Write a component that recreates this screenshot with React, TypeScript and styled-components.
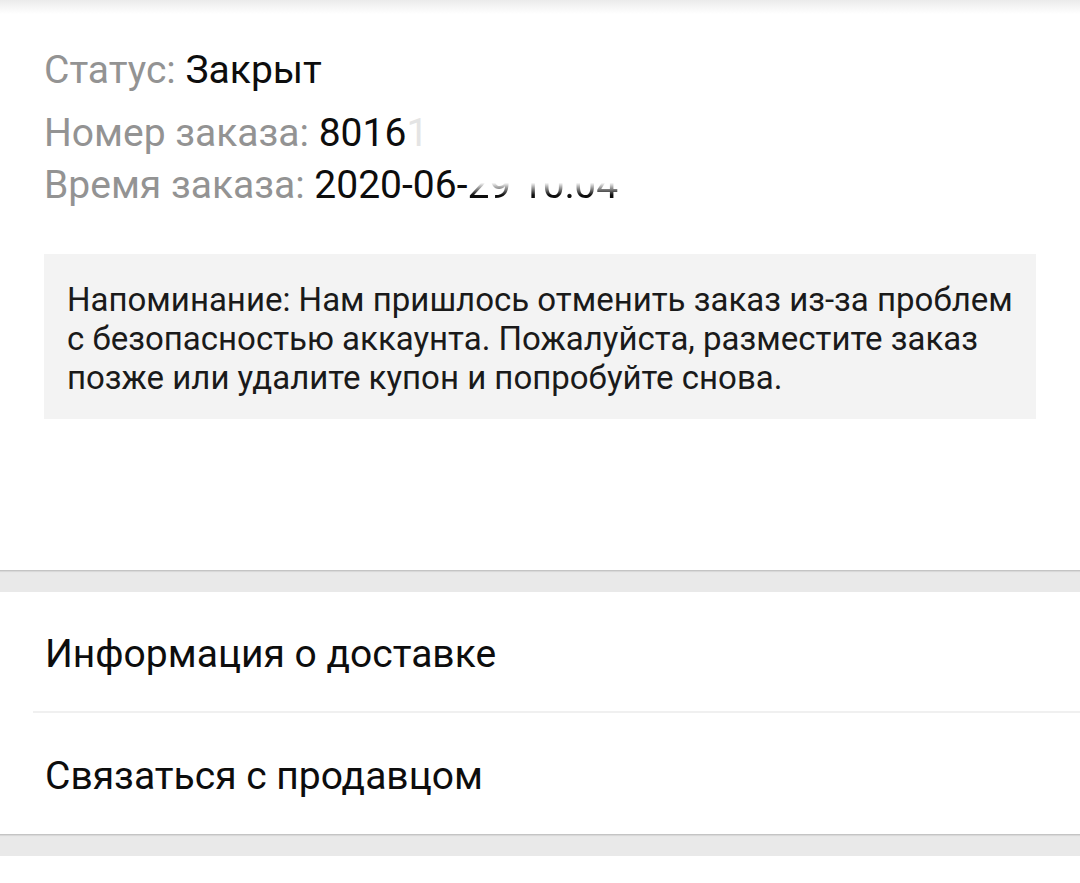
import styled, { createGlobalStyle } from 'styled-components';

const Global = createGlobalStyle`
  html, body {
    margin: 0;
    padding: 0;
    background: #fff;
    font-family: Roboto, "Noto Sans", "Liberation Sans", sans-serif;
  }
`;

const Page = styled.div`
  width: 1080px;
  height: 883px;
  overflow: hidden;
  background: #fff;
  display: flex;
  flex-direction: column;
`;

const TopShade = styled.div`
  height: 14px;
  background: linear-gradient(#ebebeb, #fff);
  flex-shrink: 0;
`;

const Summary = styled.section`
  padding: 30px 44px 151px 44px;
`;

const Line = styled.p<{ $gap?: number }>`
  margin: 0;
  margin-top: ${(p) => p.$gap ?? 0}px;
  font-size: 39px;
  line-height: 52px;
  color: #0d0d0d;
  white-space: nowrap;
`;

const Label = styled.span`
  color: #939393;
`;

const Faded = styled.span<{ $from: string; $to: string }>`
  background: linear-gradient(#fff ${(p) => p.$from}, #0d0d0d ${(p) => p.$to});
  -webkit-background-clip: text;
  background-clip: text;
  color: transparent;
`;

const Ghost = styled.span`
  color: #e4e4e4;
`;

const Notice = styled.div`
  margin-top: 43px;
  background: #f3f3f3;
  padding: 26px 20px 26px 23px;
  font-size: 33px;
  line-height: 39px;
  color: #1a1a1a;
  height: 165px;
  box-sizing: border-box;
`;

const Band = styled.div`
  height: 21px;
  flex-shrink: 0;
  background: #e9e9e9;
  border-top: 1px solid #c4c4c4;
  box-shadow: inset 0 2px 1px -1px #d6d6d6;
`;

const List = styled.div`
  padding-left: 33px;
`;

const Row = styled.div<{ $last?: boolean }>`
  height: 121px;
  box-sizing: border-box;
  display: flex;
  align-items: center;
  padding: 5px 0 0 12px;
  font-size: 39px;
  color: #0d0d0d;
  border-bottom: ${(p) => (p.$last ? 'none' : '2px solid #f0f0f0')};
`;

export default function App() {
  return (
    <Page>
      <Global />
      <TopShade />
      <Summary>
        <Line>
          <Label>Статус:</Label> Закрыт
        </Line>
        <Line $gap={11}>
          <Label>Номер заказа:</Label> 8016<Ghost>1</Ghost>
        </Line>
        <Line>
          <Label>Время заказа:</Label> 2020-06-
          <Faded $from="45%" $to="72%">
            29 10:04
          </Faded>
        </Line>
        <Notice>
          Напоминание: Нам пришлось отменить заказ из-за проблем с безопасностью
          аккаунта. Пожалуйста, разместите заказ позже или удалите купон и
          попробуйте снова.
        </Notice>
      </Summary>
      <Band />
      <List>
        <Row>Информация о доставке</Row>
        <Row $last>Связаться с продавцом</Row>
      </List>
      <Band />
    </Page>
  );
}
